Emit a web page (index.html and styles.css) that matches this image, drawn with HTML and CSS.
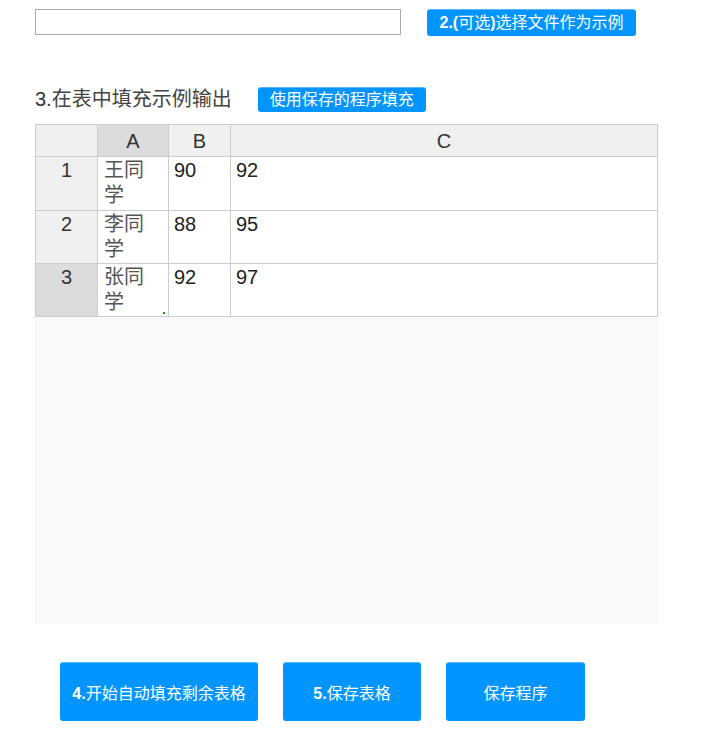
FILE: index.html
```html
<!DOCTYPE html>
<html lang="zh-CN">
<head>
<meta charset="utf-8">
<title>示例填充</title>
<link rel="stylesheet" href="styles.css">
</head>
<body>
<div class="page">
  <div class="file-row">
    <input class="file-input" type="text">
    <button class="btn btn-small btn-file"><b>2.(</b>可选<b>)</b>选择文件作为示例</button>
  </div>

  <div class="title-row">
    <span class="title"><span class="num">3.</span>在表中填充示例输出</span>
    <button class="btn btn-small btn-use">使用保存的程序填充</button>
  </div>

  <div class="sheet">
    <table class="grid">
      <colgroup>
        <col class="c-rh"><col class="c-a"><col class="c-b"><col class="c-c">
      </colgroup>
      <thead>
        <tr>
          <th class="corner"></th>
          <th class="hl">A</th>
          <th>B</th>
          <th>C</th>
        </tr>
      </thead>
      <tbody>
        <tr class="first">
          <th class="rh">1</th>
          <td class="cjk">王同学</td>
          <td>90</td>
          <td>92</td>
        </tr>
        <tr>
          <th class="rh">2</th>
          <td class="cjk">李同学</td>
          <td>88</td>
          <td>95</td>
        </tr>
        <tr>
          <th class="rh hl">3</th>
          <td class="cjk sel">张同学<span class="handle"></span></td>
          <td>92</td>
          <td>97</td>
        </tr>
      </tbody>
    </table>
  </div>

  <div class="actions">
    <button class="btn btn-big btn-w1"><b>4.</b>开始自动填充剩余表格</button>
    <button class="btn btn-big btn-w2"><b>5.</b>保存表格</button>
    <button class="btn btn-big btn-w3">保存程序</button>
  </div>
</div>
</body>
</html>
```

FILE: styles.css
```css
html, body {
  margin: 0;
  padding: 0;
  background: #ffffff;
}

body {
  font-family: "Liberation Sans", "Noto Sans CJK SC", sans-serif;
  color: #333333;
}

.page {
  padding: 9px 0 0 35px;
}

.file-row {
  display: flex;
  align-items: flex-start;
  gap: 26px;
}

.file-input {
  box-sizing: border-box;
  width: 366px;
  height: 26px;
  margin: 0;
  border: 1px solid #aaaaaa;
  background: #ffffff;
  padding: 0 4px;
  outline: none;
}

.btn {
  box-sizing: border-box;
  margin: 0;
  border: none;
  border-top: 1px solid #55b8ff;
  border-radius: 3px;
  background: #0395ff;
  color: #ffffff;
  font-family: "Liberation Sans", "Noto Sans CJK SC", sans-serif;
  font-size: 16px;
  cursor: pointer;
  white-space: nowrap;
}

.btn b {
  font-weight: bold;
}

.btn-small {
  height: 27px;
  padding: 0 9px;
  line-height: 24px;
}

.btn-file {
  width: 209px;
  padding: 0;
  text-align: center;
}

.title-row {
  display: flex;
  align-items: center;
  gap: 26px;
  margin-top: 51px;
  height: 25px;
}

.title {
  font-size: 20px;
  color: #444444;
  line-height: 25px;
}

.title .num {
  color: #333333;
}

.btn-use {
  width: 168px;
  height: 25px;
  line-height: 22px;
  padding: 0;
  text-align: center;
}

.sheet {
  margin-top: 12px;
  width: 624px;
  height: 500px;
  background: #f9f9f9;
}

.grid {
  border-collapse: collapse;
  table-layout: fixed;
  width: 622px;
  background: #ffffff;
  font-size: 20px;
}

.c-rh { width: 62px; }
.c-a { width: 71px; }
.c-b { width: 62px; }
.c-c { width: 427px; }

.grid th,
.grid td {
  border: 1px solid #cccccc;
  padding: 0;
}

.grid thead th {
  height: 31px;
  background: #f0f0f0;
  font-weight: normal;
  text-align: center;
  vertical-align: middle;
  color: #333333;
  line-height: 20px;
}

.grid thead th.hl {
  background: #dcdcdc;
}

.grid tbody th.rh {
  background: #f0f0f0;
  font-weight: normal;
  text-align: center;
  vertical-align: top;
  color: #333333;
  line-height: 25px;
  padding-top: 1px;
}

.grid tbody th.rh.hl {
  background: #dcdcdc;
}

.grid td {
  vertical-align: top;
  padding: 1px 6px 1px 5px;
  line-height: 25px;
  color: #222222;
  height: 50px;
}

.grid tr.first td {
  height: 51px;
}

.grid td.cjk {
  padding-left: 6px;
  padding-right: 6px;
  color: #555555;
  word-break: break-all;
}

.grid td.sel {
  position: relative;
}

.handle {
  position: absolute;
  right: 3px;
  bottom: 2px;
  width: 2px;
  height: 2px;
  background: #1a9e1a;
}

.actions {
  display: flex;
  gap: 25px;
  margin: 38px 0 0 25px;
}

.btn-big {
  height: 59px;
  padding: 0;
  text-align: center;
}

.btn-w1 { width: 198px; }
.btn-w2 { width: 138px; }
.btn-w3 { width: 139px; }
```
